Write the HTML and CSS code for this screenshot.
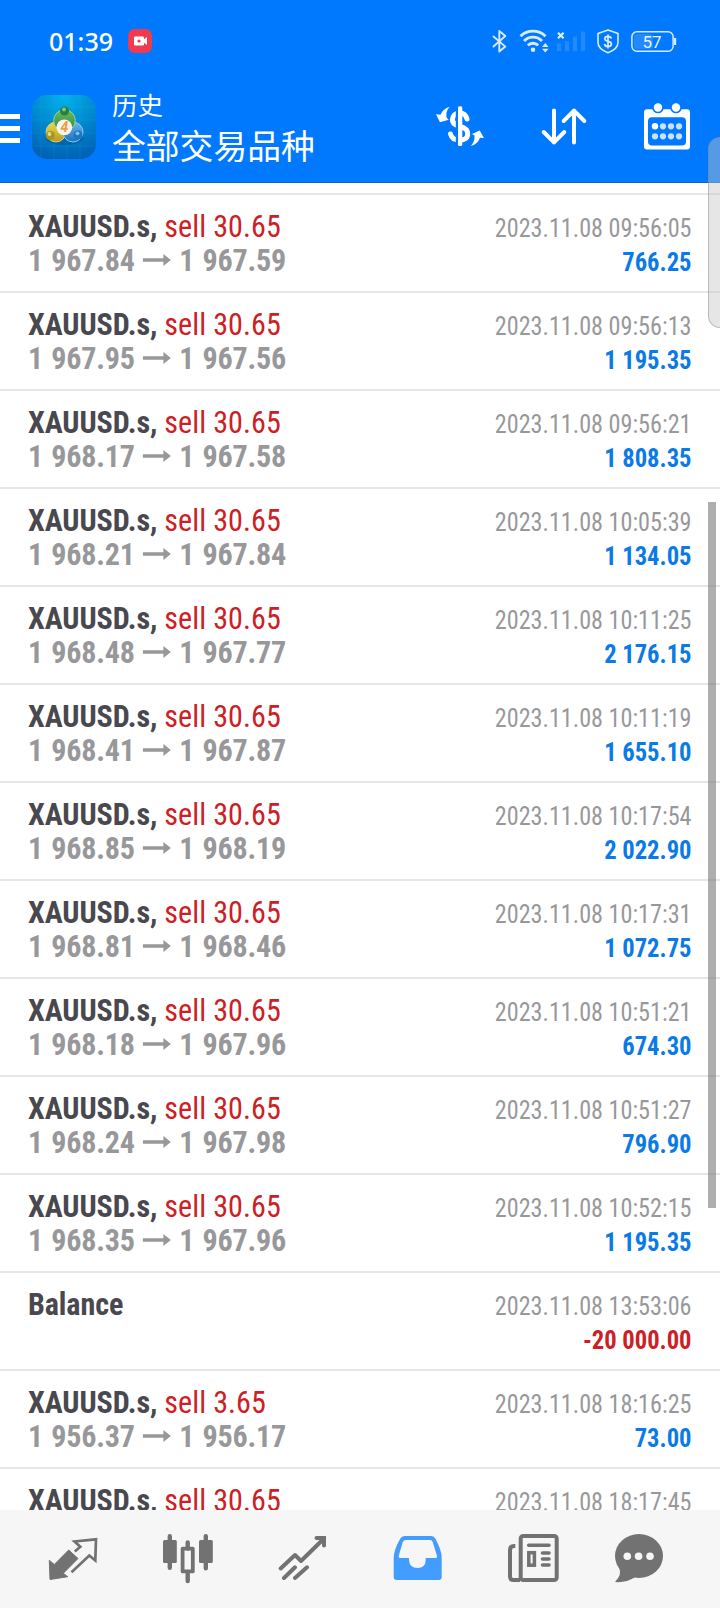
FILE: index.html
```html
<!DOCTYPE html>
<html lang="zh-CN">
<head>
<meta charset="utf-8">
<title>历史</title>
<link rel="stylesheet" href="styles.css">
</head>
<body>
<div class="app">
  <header class="header">
    <div class="status">
      <span class="clock">01:39</span>
      <svg class="rec" width="24" height="24" viewBox="0 0 24 24"><rect width="24" height="24" rx="6.5" fill="#f03a50"/><rect x="6" y="7.5" width="10" height="9" rx="1.2" fill="#fff"/><path d="M15 11l4-3v8l-4-3z" fill="#fff"/><circle cx="11" cy="12" r="1.6" fill="#f03a50"/></svg>
      <svg class="indicators" width="190" height="28" viewBox="0 0 190 28" fill="none" stroke="#d9ebff">
        <path d="M3.500 8.500L15.300 18.600L9.300 23.600V3L15.300 8L3.500 18.500" stroke-width="1.900" stroke-linejoin="round" stroke-linecap="round"/>
        <path d="M30.500 8.200a18 18 0 0 1 25 0M34 13a12.500 12.500 0 0 1 18 0M37.800 17.300a7.500 7.500 0 0 1 10.400 0" stroke-width="2.900"/>
        <circle cx="43" cy="21.800" r="2.300" fill="#d9ebff" stroke="none"/>
        <path d="M52 19l3.300-4 3.300 4zM52 20.800l3.300 3.800 3.300-3.800z" fill="#d9ebff" stroke="none"/>
        <path d="M68 4.700l5.600 5.600m0-5.600l-5.600 5.600" stroke-width="2.200"/>
        <g fill="#2389ff" stroke="none"><rect x="67" y="15.500" width="4" height="7.500"/><rect x="75" y="13" width="4" height="10"/><rect x="83" y="8.500" width="4" height="14.500"/><rect x="91" y="3.500" width="4" height="19.500"/></g>
        <path d="M118 2l10 3.500v9c0 5-4 8-10 10.200c-6-2.200-10-5.200-10-10.200v-9z" stroke-width="1.600" stroke-linejoin="round"/>
        <path d="M121.300 10.500c-.4-1.500-1.600-2.200-3.300-2.200s-3.200.8-3.200 2.500c0 3.600 6.600 1.600 6.600 5.200c0 1.700-1.500 2.500-3.400 2.500s-3.200-.8-3.500-2.500M118 6.500v14" stroke-width="1.700"/>
        <rect x="144" y="6" width="19" height="15" rx="3" fill="#2389ff" stroke="none"/>
        <rect x="141.900" y="3.800" width="41.200" height="19.500" rx="5" stroke-width="1.500"/>
        <rect x="184" y="10" width="2.200" height="7" fill="#d9ebff" stroke="none"/>
        <text class="charge" x="162" y="19.500" text-anchor="middle">57</text>
      </svg>
    </div>
    <div class="toolbar">
      <svg class="menu" width="20" height="30" viewBox="0 0 20 30" fill="#fff"><path d="M0 0h20v5H0zM0 12h20v5H0zM0 24h20v5H0z"/></svg>
      <svg class="logo" width="64" height="64" viewBox="0 0 64 64">
        <defs>
          <radialGradient id="sky" cx=".5" cy="0" r="1"><stop offset="0" stop-color="#00b4ee"/><stop offset=".5" stop-color="#008bd0"/><stop offset="1" stop-color="#0062b4"/></radialGradient>
          <linearGradient id="leaf" x2="0" y2="1"><stop offset="0" stop-color="#6fb868"/><stop offset="1" stop-color="#2d8a35"/></linearGradient>
          <linearGradient id="gold" x2="0" y2="1"><stop offset="0" stop-color="#eadb48"/><stop offset="1" stop-color="#b69a24"/></linearGradient>
          <linearGradient id="sea" x2="0" y2="1"><stop offset="0" stop-color="#6db7ea"/><stop offset="1" stop-color="#1573bd"/></linearGradient>
        </defs>
        <rect width="64" height="64" rx="15" fill="url(#sky)"/>
        <path d="M9 0v64M22 0v64M35 0v64M48 0v64M0 12h64M0 25h64M0 38h64M0 51h64" stroke="#35b5e8" stroke-width=".6" opacity=".25"/>
        <ellipse cx="32.500" cy="43" rx="19" ry="7" fill="#04508c" opacity=".45"/>
        <circle cx="24" cy="37" r="10" fill="url(#gold)" stroke="#d8cf70" stroke-width="1"/>
        <circle cx="41" cy="37" r="10" fill="url(#sea)" stroke="#8cc8ee" stroke-width="1"/>
        <circle cx="32.500" cy="25.500" r="10.800" fill="url(#leaf)" stroke="#9fd096" stroke-width="1"/>
        <circle cx="32.500" cy="16" r="4.500" fill="#26803a"/>
        <circle cx="18.300" cy="40.500" r="4.500" fill="#a89420"/>
        <circle cx="46" cy="40" r="4.500" fill="#1f76bd"/>
        <circle cx="32" cy="14.500" r="1.900" fill="#87c488"/><circle cx="17.500" cy="39" r="1.900" fill="#e6dc83"/><circle cx="45.500" cy="38.300" r="1.900" fill="#83bfe9"/>
        <circle cx="32.300" cy="32.300" r="7.900" fill="#f7f3ee"/>
        <text class="four" x="32.300" y="37.300" text-anchor="middle">4</text>
      </svg>
      <div class="titles"><div class="section">历史</div><div class="scope">全部交易品种</div></div>
      <svg class="tool" width="52" height="48" viewBox="0 0 52 48">
        <path d="M33 16C32 12 29.500 10 25.500 10C21 10 18.500 13 18.500 16.500C18.500 21 22 22.300 26 23.500C31 25 33.700 26.500 33.700 31C33.700 35 30.500 37.200 26 37.200C20.500 37.200 17.500 35 16.500 31" fill="none" stroke="#fff" stroke-width="5" stroke-linecap="round"/>
        <path d="M22.900 4v39" stroke="#0079ff" stroke-width="2.200"/>
        <rect x="24" y="3.300" width="4.300" height="39.700" rx="1.500" fill="#fff"/>
        <path d="M15.700 3.700Q11.500 8 12.500 14.500L14.700 16.700L6 19.200L2 11.300L6.500 11.700Q9 5.500 15.700 3.700z" fill="#fff"/>
        <path d="M36.700 42.900Q41 39 40.500 32.500L38 31L45.700 27.500L50 35L46 34.700Q43.500 41.500 36.700 42.900z" fill="#fff"/>
      </svg>
      <svg class="tool" width="48" height="42" viewBox="0 0 48 42" fill="none" stroke="#fff" stroke-width="4" stroke-linecap="round" stroke-linejoin="round"><path d="M14 4.500v32M3.700 26L14 36.300L24.300 26M34 36.500v-32M23.700 15L34 4.700L44.300 15"/></svg>
      <svg class="tool" width="48" height="50" viewBox="0 0 48 50">
        <rect x="1" y="7.300" width="46" height="40.300" rx="3" fill="#fff"/>
        <rect x="5" y="15.300" width="38" height="28.300" rx="4" fill="#0079ff"/>
        <path d="M9.300 6h11.400a5.700 5.300 0 0 1-11.400 0zM27.300 6h11.400a5.700 5.300 0 0 1-11.400 0z" fill="#0079ff"/>
        <g fill="#fff"><circle cx="15" cy="5.500" r="4.200"/><circle cx="33" cy="5.500" r="4.200"/><circle cx="12" cy="24.300" r="3.200"/></g>
        <g fill="#c9e2ff"><circle cx="20" cy="24.300" r="3.100"/><circle cx="28" cy="24.300" r="3.100"/><circle cx="36" cy="24.300" r="3.100"/><circle cx="12" cy="34.300" r="3.100"/><circle cx="20" cy="34.300" r="3.100"/><circle cx="28" cy="34.300" r="3.100"/><circle cx="36" cy="34.300" r="3.100"/></g>
      </svg>
    </div>
  </header>

  <main class="deals" id="deals"></main>

  <nav class="tabs">
    <svg width="50" height="56" viewBox="0 0 50 56"><path d="M1.300 30.300L6.300 34.500L20.700 20L30 28.500L15.300 43.300L19.700 46.700L2 49.500z" fill="#727272" stroke="#727272" stroke-width="1" stroke-linejoin="round"/><path d="M26.800 21.500L32.300 16.700L26.500 11.500L48 9.300L47.300 30.500L41.300 25.500L23.500 42.300" fill="none" stroke="#727272" stroke-width="2.700"/></svg>
    <svg width="50" height="56" viewBox="0 0 50 56"><g fill="#727272"><rect x="0" y="10" width="13.800" height="23" rx="1.500"/><rect x="36" y="10" width="13.800" height="23" rx="1.500"/></g><rect x="19.600" y="18.700" width="10.200" height="22.700" fill="none" stroke="#727272" stroke-width="3.800" stroke-linejoin="round"/><path d="M6.800 6.300v31.500M42.800 6.300v32M24.700 12.500v6M24.700 42v9" stroke="#727272" stroke-width="4.400" stroke-linecap="round"/></svg>
    <svg width="50" height="56" viewBox="0 0 50 56" fill="none" stroke="#727272" stroke-width="4" stroke-linecap="round" stroke-linejoin="round"><path d="M2.700 38.500L17 25L23 31L46 8.500M6 48L17 37.300M17 48L29 37.300"/><path d="M38.500 8H46V15.500" stroke-linejoin="miter"/></svg>
    <svg width="50" height="56" viewBox="0 0 50 56"><path fill="#429dff" fill-rule="evenodd" d="M11.500 6H38.500Q41 6 42.300 8.500Q48.700 20 48.700 28V47Q48.700 50 45.700 50H3.700Q.7 50 .7 47V28Q.7 20 7.300 8.500Q8.700 6 11.500 6zM13 10Q10.700 10 9.800 12L5.700 26Q5.300 28 7 28H16V30Q16.500 38 24.500 38Q32.500 38 32.700 30V28H42.700Q44.600 28 44 26L39.700 12Q39 10 37 10z"/></svg>
    <svg width="52" height="56" viewBox="0 0 52 56" fill="none" stroke="#727272" stroke-width="4" stroke-linecap="round"><rect x="12.700" y="6" width="36" height="44" rx="2.500"/><path d="M7.300 16H6Q2 16 2 20V46.500Q2 50 5.500 50H12" stroke-linecap="butt"/><path d="M20.700 15.300H41M34.500 23H41M34.500 29H41M34.500 35H41" stroke-width="3.600"/><rect x="20.800" y="22.700" width="5.600" height="12.500" stroke-width="3.500"/></svg>
    <svg class="chat" width="50" height="56" viewBox="0 0 50 56"><ellipse cx="25" cy="26" rx="24" ry="22" fill="#727272"/><path d="M5 38Q8.500 44 1 52Q12 53 21 47.300z" fill="#727272"/><g fill="#f6f6f6"><circle cx="13.300" cy="26.300" r="3.800"/><circle cx="24.600" cy="26.300" r="3.800"/><circle cx="36" cy="26.300" r="3.800"/></g></svg>
  </nav>
  <div class="edge-panel"></div>
  <div class="scroll-thumb"></div>
</div>
<script src="deals.js"></script>
</body>
</html>
```
FILE: styles.css
```css
* { box-sizing: border-box; }
body { margin: 0; background: #fff; }
.app {
  position: relative;
  width: 720px;
  height: 1608px;
  display: flex;
  flex-direction: column;
  overflow: hidden;
  font-family: "Roboto Condensed", Roboto, sans-serif;
}
.header {
  flex: none;
  height: 183px;
  background: #0079ff;
  border-bottom: 1px solid #0068cf;
  color: #fff;
}
.status {
  height: 84px;
  display: flex;
  align-items: flex-start;
  padding: 28px 40px 0 49px;
}
.clock {
  width: 79px;
  font: 500 25px/26px "Noto Sans", sans-serif;
}
.rec { margin-top: 1px; }
.indicators { margin-left: auto; }
.charge {
  font: 400 17px Roboto, sans-serif;
  fill: #e8f3ff;
  stroke: none;
}
.toolbar {
  height: 86px;
  display: flex;
  align-items: center;
  padding-right: 29px;
}
.menu { margin: 3px 12px 0 0; }
.logo { margin-right: 16px; }
.four {
  font: italic 700 14px Roboto, sans-serif;
  fill: #f39a3c;
}
.titles {
  flex: 1;
  padding-top: 2px;
  font-family: "Noto Sans CJK SC", sans-serif;
  white-space: nowrap;
}
.section { font-size: 25.5px; line-height: 34px; }
.scope { font-size: 33.8px; line-height: 48px; }
.tool + .tool { margin-left: 54px; }
.tool:last-child { margin-left: 55px; }

.deals {
  flex: 1;
  min-height: 0;
  overflow: hidden;
  padding-top: 10px;
}
.deal {
  height: 98px;
  display: flex;
  justify-content: space-between;
  padding: 14px 28px 0;
  border-top: 2px solid #e6e6e6;
  white-space: nowrap;
}
.order {
  font-size: 32px;
  line-height: 34px;
  transform: scaleX(.94);
  transform-origin: left;
}
.symbol { font-weight: 700; color: #48484e; letter-spacing: -.1px; }
.side { color: #cb2126; letter-spacing: .1px; }
.prices {
  display: grid;
  grid-template-columns: 122px 30px auto;
  align-items: center;
  font-weight: 700;
  letter-spacing: -.2px;
  word-spacing: 1.5px;
  color: #98989b;
}
.close { padding-left: 9px; }
.time, .profit {
  font-size: 26px;
  line-height: 34px;
  text-align: right;
  transform-origin: right;
}
.result { padding-top: 2px; }
.time { color: #98989b; transform: scaleX(.93); }
.profit { font-weight: 700; color: #0a7ae6; transform: scaleX(.945); }
.profit.loss { color: #cb2126; }

.tabs {
  flex: none;
  height: 98px;
  display: flex;
  gap: 65px;
  padding: 20px 0 0 48px;
  background: #f6f6f6;
}
.tabs svg { flex: none; }
.chat { margin-left: -11px; }

.edge-panel {
  position: absolute;
  left: 708px;
  top: 137px;
  width: 14px;
  height: 191px;
  border: 1px solid rgba(130, 130, 130, .45);
  border-radius: 12px 0 0 12px;
  background: rgba(197, 197, 197, .43);
}
.scroll-thumb {
  position: absolute;
  left: 708px;
  top: 502px;
  width: 8px;
  height: 706px;
  background: rgba(120, 120, 120, .6);
}
```
FILE: deals.js
```js
const deals = [
  ["30.65", "1 967.84", "1 967.59", "09:56:05", "766.25"],
  ["30.65", "1 967.95", "1 967.56", "09:56:13", "1 195.35"],
  ["30.65", "1 968.17", "1 967.58", "09:56:21", "1 808.35"],
  ["30.65", "1 968.21", "1 967.84", "10:05:39", "1 134.05"],
  ["30.65", "1 968.48", "1 967.77", "10:11:25", "2 176.15"],
  ["30.65", "1 968.41", "1 967.87", "10:11:19", "1 655.10"],
  ["30.65", "1 968.85", "1 968.19", "10:17:54", "2 022.90"],
  ["30.65", "1 968.81", "1 968.46", "10:17:31", "1 072.75"],
  ["30.65", "1 968.18", "1 967.96", "10:51:21", "674.30"],
  ["30.65", "1 968.24", "1 967.98", "10:51:27", "796.90"],
  ["30.65", "1 968.35", "1 967.96", "10:52:15", "1 195.35"],
  [null, "", "", "13:53:06", "-20 000.00"],
  ["3.65", "1 956.37", "1 956.17", "18:16:25", "73.00"],
  ["30.65", "", "", "18:17:45", ""]
];
const arrow = '<svg width="30" height="12" viewBox="0 0 30 12" fill="#98989b"><path d="M0 4.300h22V0l8 6-8 6V7.700H0z"/></svg>';

document.getElementById("deals").innerHTML = deals.map(([volume, open, close, time, profit]) => {
  const title = volume
    ? `<span class="symbol">XAUUSD.s,</span> <span class="side">sell ${volume}</span>`
    : '<span class="symbol">Balance</span>';
  const prices = open
    ? `<div class="prices"><span>${open}</span>${arrow}<span class="close">${close}</span></div>`
    : "";
  const tone = profit.startsWith("-") ? "profit loss" : "profit";
  return `<div class="deal">
    <div class="order"><div>${title}</div>${prices}</div>
    <div class="result"><div class="time">2023.11.08 ${time}</div><div class="${tone}">${profit}</div></div>
  </div>`;
}).join("");
```
